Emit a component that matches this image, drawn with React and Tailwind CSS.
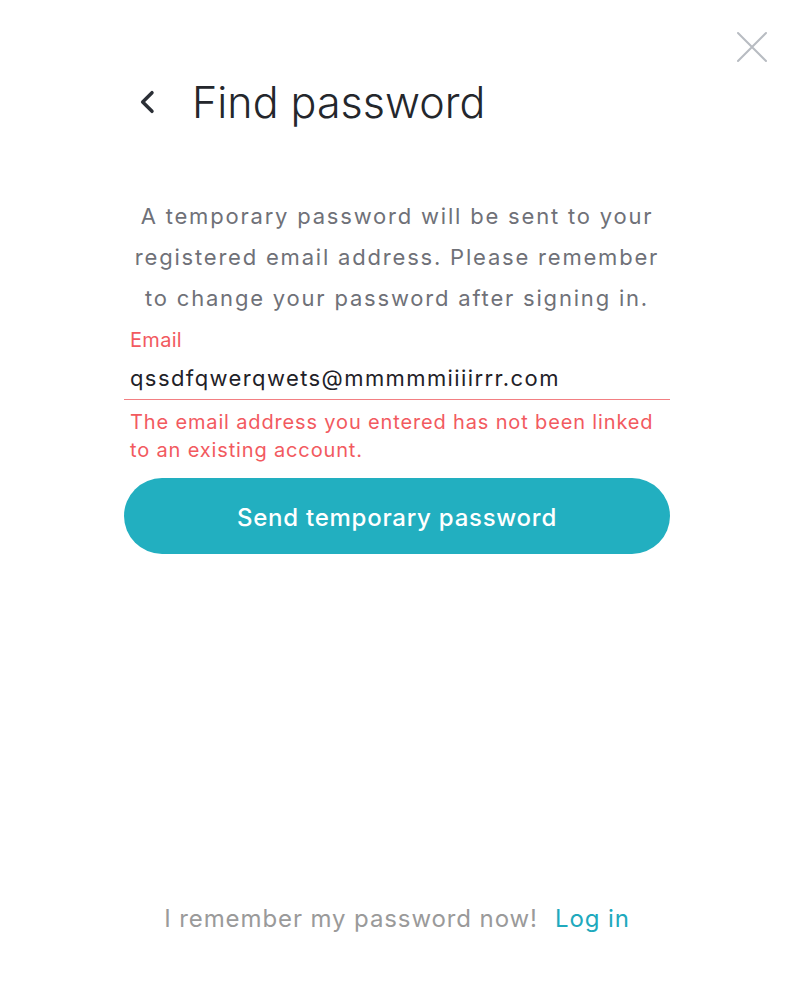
import React from 'react';

function ChevronLeft() {
  return (
    <svg viewBox="0 0 24 24" className="h-8 w-8" fill="none" stroke="#2b2f36" strokeWidth="2.6" strokeLinecap="round" strokeLinejoin="round">
      <path d="M15 5l-7 7 7 7" />
    </svg>
  );
}

function CloseIcon() {
  return (
    <svg viewBox="0 0 32 32" className="h-8 w-8" fill="none" stroke="#b8bcc2" strokeWidth="2" strokeLinecap="round">
      <path d="M2 2l28 28M30 2L2 30" />
    </svg>
  );
}

export default function App() {
  return (
    <div className="relative flex h-[999px] w-[799px] flex-col bg-white font-['Inter',sans-serif]">
      {/* close */}
      <button type="button" className="absolute right-[31px] top-[31px]">
        <CloseIcon />
      </button>

      <div className="ml-[124px] flex w-[546px] flex-1 flex-col">
        {/* header */}
        <div className="mt-[75px] flex items-center">
          <span className="ml-[8px]"><ChevronLeft /></span>
          <h1 className="ml-[28px] text-[43px] font-light leading-[54px] text-[#24272c]">Find password</h1>
        </div>

        {/* description */}
        <p className="mt-[67px] text-center text-[22px] leading-[41px] tracking-[1.8px] text-[#6f7178]">
          A temporary password will be sent to your registered email address. Please remember to change your password after signing in.
        </p>

        {/* email field */}
        <div className="mt-[7px]">
          <label className="block pl-[6px] text-[20px] leading-[28px] tracking-[0.3px] text-[#f25a5f]">Email</label>
          <div className="mt-[8px] border-b border-solid border-b-[#f27f82] pb-[5px] pl-[6px] pr-[5px] text-[22px] leading-[32px] tracking-[1.4px] text-[#1f2228]">
            qssdfqwerqwets@mmmmmiiiirrr.com
          </div>
          <p className="mt-[8px] pl-[6px] pr-[10px] text-[20px] leading-[28px] tracking-[0.85px] text-[#f25a5f]">
            The email address you entered has not been linked to an existing account.
          </p>
        </div>

        {/* submit */}
        <button type="button" className="mt-[14px] h-[76px] w-full rounded-full bg-[#22afc0] pt-[4px] text-[24px] font-medium tracking-[0.75px] text-white">
          Send temporary password
        </button>

        {/* footer */}
        <div className="mt-auto mb-[64px] flex justify-center gap-[17px] text-[24px] leading-[32px] tracking-[0.9px]">
          <span className="text-[#9a9a9a]">I remember my password now!</span>
          <a className="text-[#20a9bd]">Log in</a>
        </div>
      </div>
    </div>
  );
}
